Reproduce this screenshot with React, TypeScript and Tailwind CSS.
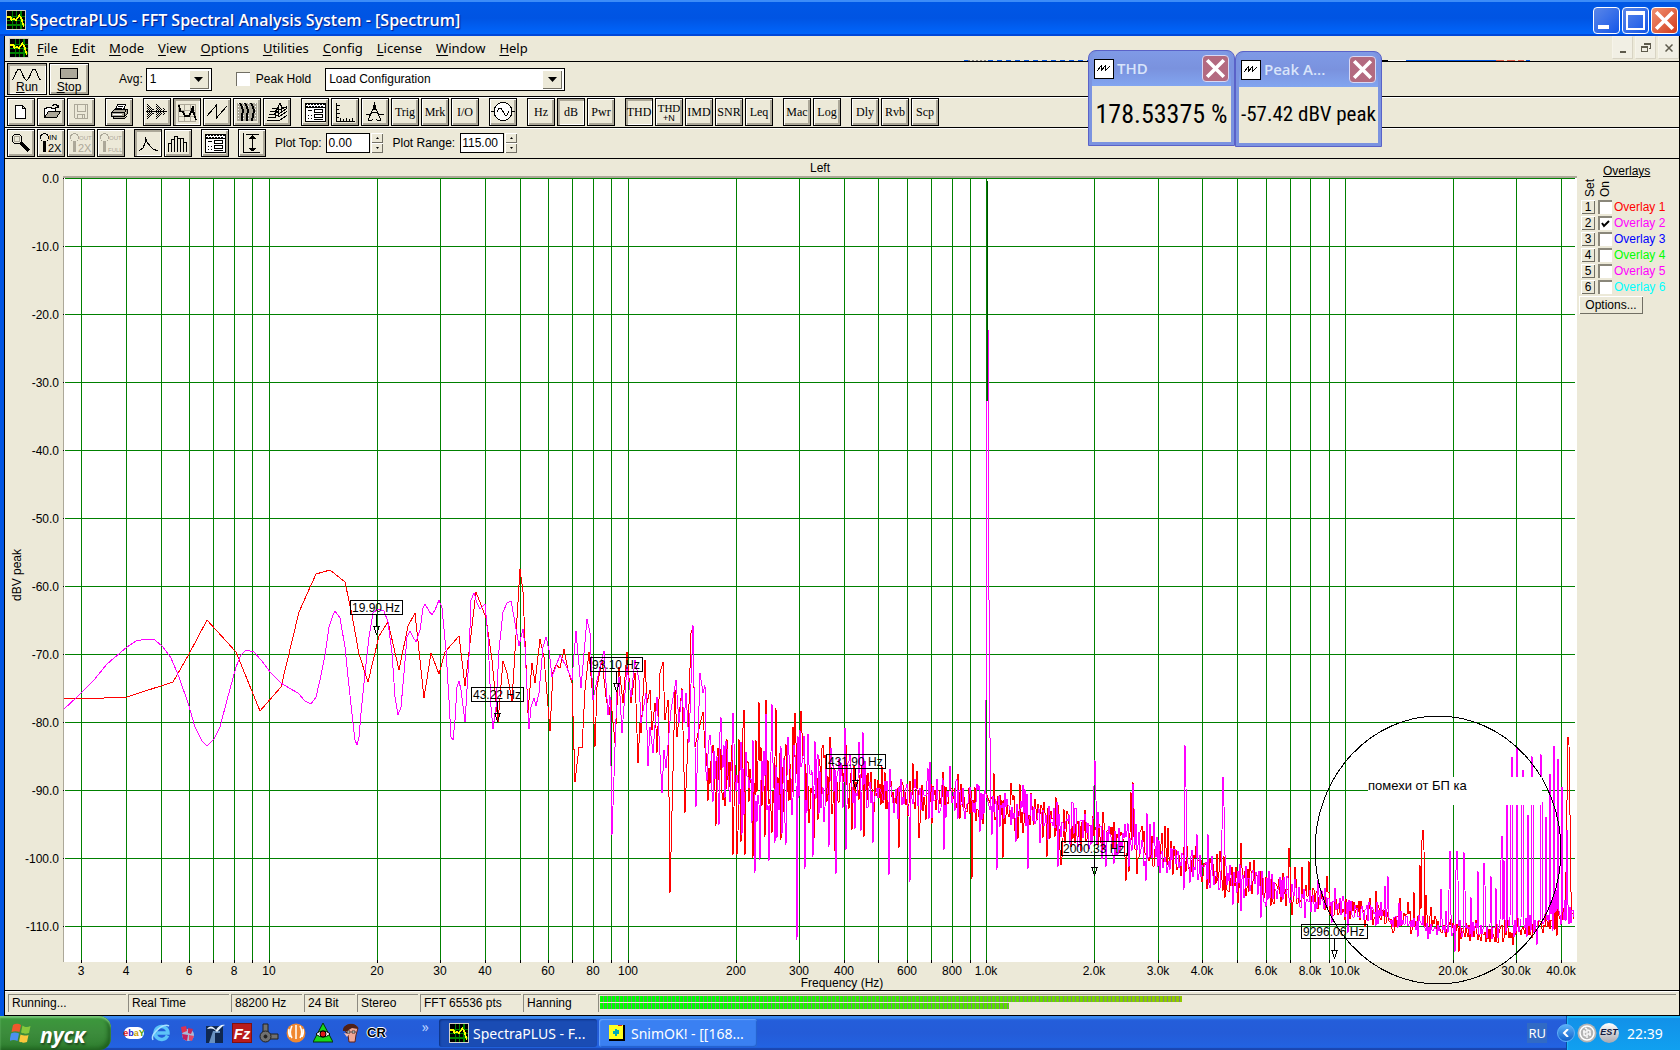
import type { ReactNode } from 'react';
import { clsx } from 'clsx';

const menuItems = ['File', 'Edit', 'Mode', 'View', 'Options', 'Utilities', 'Config', 'License', 'Window', 'Help'];

const overlays = [
  { id: 1, color: 'text-[#ff0000]', on: false },
  { id: 2, color: 'text-[#ff00ff]', on: true },
  { id: 3, color: 'text-[#0000ff]', on: false },
  { id: 4, color: 'text-[#00ff00]', on: false },
  { id: 5, color: 'text-[#ff00ff]', on: false },
  { id: 6, color: 'text-[#00ffff]', on: false },
];

const statusCells = [
  { text: 'Running...', width: 'w-[118px]' },
  { text: 'Real Time', width: 'w-[101px]' },
  { text: '88200 Hz', width: 'w-[71px]' },
  { text: '24 Bit', width: 'w-[51px]' },
  { text: 'Stereo', width: 'w-[61px]' },
  { text: 'FFT 65536 pts', width: 'w-[101px]' },
  { text: 'Hanning', width: 'w-[73px]' },
];

/* ---------- spectrum data ---------- */

type Point = [number, number];

// stretches below ~160 Hz, where single bins are visible
const redLow: Point[] = [
  [64, 698], [104, 698], [127, 697], [173, 682], [189, 654], [207, 620], [236, 652], [260, 711], [281, 687], [299, 612],
  [316, 574], [330, 570], [345, 582], [352, 615], [359, 654], [368, 682], [379, 636], [388, 622], [399, 670], [408, 626],
  [415, 613], [424, 698], [431, 653], [439, 674], [445, 652], [459, 636], [465, 686], [476, 592], [486, 618], [492, 660],
  [498, 722], [503, 661], [507, 673], [512, 701], [520, 569], [523, 592], [528, 713], [532, 663], [535, 683], [540, 639],
  [544, 657], [550, 731], [553, 672], [556, 665], [560, 668], [564, 649], [568, 670], [572, 683], [575, 782], [579, 747],
  [582, 748], [585, 690], [589, 652], [593, 700], [595, 747], [597, 687], [602, 660], [606, 697], [609, 715], [611, 700],
  [615, 743], [619, 667], [623, 703], [627, 652], [631, 703], [635, 673], [638, 763], [640, 723], [641, 733], [645, 660],
  [647, 703], [650, 690], [652, 730], [655, 703], [657, 753], [660, 673], [663, 662], [665, 720], [668, 700], [670, 893],
  [675, 690], [677, 737], [682, 688], [685, 813], [688, 740], [691, 633], [693, 628], [695, 747], [698, 733], [703, 712],
];

const magentaLow: Point[] = [
  [64, 709], [77, 697], [94, 680], [107, 664], [127, 647], [136, 641], [146, 639], [155, 640], [163, 647], [171, 658],
  [179, 677], [188, 703], [195, 727], [202, 741], [207, 746], [214, 739], [220, 727], [227, 700], [236, 667], [241, 655],
  [246, 650], [254, 652], [261, 660], [271, 673], [281, 683], [289, 688], [298, 693], [305, 701], [311, 704], [316, 697],
  [320, 680], [325, 655], [329, 627], [333, 615], [335, 611], [340, 618], [345, 647], [348, 677], [353, 723], [355, 740],
  [357, 745], [359, 737], [361, 713], [365, 673], [369, 637], [373, 613], [378, 609], [384, 611], [388, 622], [392, 653],
  [395, 697], [398, 715], [401, 707], [404, 673], [407, 637], [410, 631], [413, 637], [416, 642], [420, 630], [423, 608],
  [425, 604], [429, 611], [432, 615], [435, 610], [439, 600], [442, 608], [446, 650], [449, 700], [451, 737], [453, 740],
  [455, 720], [457, 687], [459, 681], [461, 690], [465, 722], [469, 657], [471, 600], [474, 593], [477, 603], [480, 609],
  [485, 604], [488, 637], [491, 707], [493, 729], [496, 707], [499, 650], [503, 612], [507, 603], [511, 601], [514, 617],
  [519, 646], [521, 637], [523, 629], [525, 647], [528, 710], [529, 729], [531, 707], [534, 698], [536, 706], [539, 693],
  [543, 647], [546, 637], [549, 650], [552, 677], [560, 655], [567, 668], [572, 680], [576, 631], [581, 688], [587, 619],
  [590, 633], [593, 700], [597, 680], [604, 651], [608, 715], [610, 695], [612, 835], [617, 690], [619, 677], [622, 733],
  [627, 667], [631, 697], [635, 660], [639, 680], [641, 723], [646, 693], [648, 766], [650, 727], [653, 753], [657, 697],
  [662, 793], [664, 750], [666, 768], [671, 710], [676, 680], [679, 723], [682, 690], [684, 723], [686, 693], [689, 743],
  [693, 625], [696, 807], [700, 673], [703, 693], [705, 685],
];

// noise floor: x, usual upper and lower edge
const floorEnvelope: [number, number, number][] = [
  [705, 722, 815], [740, 726, 825], [780, 728, 825], [820, 738, 822], [860, 751, 818], [900, 768, 820], [950, 775, 822],
  [1000, 785, 831], [1050, 796, 843], [1100, 808, 859], [1150, 830, 874], [1200, 846, 889], [1250, 860, 902],
  [1300, 876, 913], [1350, 893, 926], [1400, 906, 934], [1450, 915, 941], [1500, 920, 945], [1535, 919, 940],
  [1555, 905, 930], [1576, 898, 922],
];

const redSpikes: Point[] = [
  [716, 826], [733, 855], [737, 855], [745, 855], [753, 858], [759, 702], [776, 708], [781, 840], [802, 733], [814, 839],
  [830, 737], [846, 744], [858, 790], [889, 848], [899, 848], [913, 763], [943, 772], [972, 879], [1003, 858],
  [1056, 797], [1114, 822], [1131, 792], [1133, 782], [1168, 828], [1238, 903], [1241, 843], [1254, 860], [1289, 848],
  [1295, 867], [1302, 867], [1309, 861], [1327, 876], [1370, 898], [1376, 891], [1400, 898], [1408, 902], [1414, 892],
  [1420, 865], [1422, 840], [1423, 830], [1424, 850], [1426, 895], [1431, 907], [1516, 935], [1517, 810], [1519, 930],
  [1556, 905], [1566, 873], [1567, 800], [1568, 737], [1569, 745], [1570, 815], [1571, 892],
];

const magentaSpikes: Point[] = [
  [719, 825], [721, 717], [733, 713], [742, 835], [755, 873], [760, 860], [766, 714], [769, 861], [772, 704], [786, 845],
  [797, 940], [800, 730], [805, 869], [815, 741], [829, 847], [836, 874], [845, 728], [846, 850], [859, 742],
  [863, 732], [873, 843], [889, 875], [910, 882], [928, 768], [944, 850], [957, 779], [985, 790], [990, 810],
  [997, 870], [1023, 785], [1025, 789], [1028, 869], [1058, 867],
  [1073, 803], [1094, 786], [1095, 760], [1096, 800], [1106, 867], [1133, 784], [1134, 808], [1146, 881], [1147, 813],
  [1154, 822], [1184, 890], [1185, 745], [1186, 787], [1197, 834], [1222, 830], [1223, 777], [1224, 806], [1266, 907],
  [1335, 888], [1385, 886], [1388, 876], [1441, 889], [1449, 890], [1450, 851], [1454, 925], [1456, 870], [1457, 851],
  [1458, 880], [1460, 920], [1464, 852], [1465, 890], [1467, 925], [1471, 897], [1478, 871], [1481, 925], [1484, 863],
  [1485, 885], [1491, 876], [1496, 888], [1500, 920], [1501, 860], [1502, 836], [1504, 860], [1505, 920], [1507, 790],
  [1508, 920], [1510, 918], [1511, 800], [1512, 757], [1513, 925], [1515, 920], [1517, 747],
  [1518, 918], [1521, 920], [1522, 800], [1523, 770], [1524, 925], [1526, 918], [1528, 815], [1530, 915], [1532, 756],
  [1533, 800], [1535, 920], [1539, 920], [1541, 754], [1542, 800], [1544, 922], [1546, 817], [1548, 915], [1550, 774],
  [1552, 900], [1554, 746], [1556, 890], [1558, 759], [1560, 915], [1562, 787], [1564, 920], [1567, 830], [1568, 905],
];

function envelopeAt(x: number): [number, number] {
  for (let i = 1; i < floorEnvelope.length; i++) {
    const [x1, t1, b1] = floorEnvelope[i];
    if (x <= x1) {
      const [x0, t0, b0] = floorEnvelope[i - 1];
      const k = (x - x0) / (x1 - x0);
      return [t0 + (t1 - t0) * k, b0 + (b1 - b0) * k];
    }
  }
  return [900, 922];
}

function buildTrace(low: Point[], spikes: Point[], seed: number) {
  let s = seed;
  const rand = () => {
    s = (s * 1664525 + 1013904223) % 4294967296;
    return s / 4294967296;
  };
  const points: Point[] = [...low];
  const taken = new Set(spikes.map(p => p[0]));
  for (let x = 706; x < 1575; x++) {
    if (taken.has(x) || (x > 985 && x < 990)) continue;
    const [top, bottom] = envelopeAt(x);
    const span = bottom - top;
    let y = top + span * (rand() * 0.65 + rand() * 0.35);
    if (rand() > 0.9) y += span * 0.45;
    if (rand() > 0.93) y -= span * 0.35;
    points.push([x, Math.round(y)]);
  }
  points.push(...spikes);
  points.sort((a, b) => a[0] - b[0]);
  return points.map(p => p.join(',')).join(' ');
}

const redTrace = buildTrace(redLow, redSpikes, 7);
const magentaTrace = buildTrace(magentaLow, magentaSpikes, 1234);

const freqToX = (f: number) => Math.floor(269.4 + 358.75 * Math.log10(f / 10)) + 0.5;

const gridFreqs = [1, 10, 100, 1000, 10000]
  .flatMap(d => [1, 2, 3, 4, 5, 6, 7, 8, 9].map(n => n * d))
  .filter(f => f >= 3 && f <= 40000);

const labelledFreqs = gridFreqs.filter(f => [1, 2, 3, 4, 6, 8].includes(Number(String(f)[0])));
const freqLabel = (f: number) => (f >= 1000 ? `${(f / 1000).toFixed(1)}k` : String(f));

const levels = Array.from({ length: 12 }, (_, i) => i);

const markers = [
  { text: '19.90 Hz', left: 350, width: 53, stem: 376, top: 600 },
  { text: '43.22 Hz', left: 471, width: 53, stem: 497, top: 687 },
  { text: '93.10 Hz', left: 590, width: 53, stem: 616, top: 657 },
  { text: '431.90 Hz', left: 826, width: 60, stem: 855, top: 754 },
  { text: '2000.33 Hz', left: 1061, width: 67, stem: 1094, top: 841 },
  { text: '9296.06 Hz', left: 1301, width: 67, stem: 1334, top: 924 },
];

function SpectrumChart() {
  return (
    <svg viewBox="5 159 1573 831" className="h-full w-full font-['Liberation_Sans',Arial,sans-serif] text-[12px]" role="img" aria-label="Spectrum, left channel">
      <text x="820" y="172" textAnchor="middle">Left</text>
      <g shapeRendering="crispEdges">
        <rect x="63" y="176" width="1514" height="2" fill="#aca899" />
        <rect x="63" y="176" width="2" height="786" fill="#aca899" />
        <rect x="64" y="178" width="1513" height="784" fill="#fff" />
        <g stroke="#008000">
          {levels.map(i => (
            <line key={i} x1="65" x2="1575" y1={178.5 + i * 68} y2={178.5 + i * 68} />
          ))}
          {gridFreqs.map(f => (
            <line key={f} x1={freqToX(f)} x2={freqToX(f)} y1="179" y2="961" />
          ))}
        </g>
        <g stroke="#000">
          {levels.map(i => (
            <line key={i} x1="63" x2="64" y1={178.5 + i * 68} y2={178.5 + i * 68} />
          ))}
          {gridFreqs.map(f => (
            <line key={f} x1={freqToX(f)} x2={freqToX(f)} y1="960" y2="963" />
          ))}
        </g>
        <g fill="none">
          <polyline points={redTrace} stroke="#ff0000" />
          <polyline points={magentaTrace} stroke="#ff00ff" />
          {/* 1 kHz carrier */}
          <path d="M985.5 790V700M986.5 700V401M988.5 330V600M989.5 600V738M990.5 738V810" stroke="#ff00ff" />
          <path d="M987.5 181V401" stroke="#005000" />
        </g>
        <g fill="none" stroke="#000">
          {markers.map(m => (
            <g key={m.text}>
              <rect x={m.left + 0.5} y={m.top + 0.5} width={m.width - 1} height="14" />
              <path d={`M${m.stem + 0.5} ${m.top + 15}v11m-3 0h6l-3 8z`} />
            </g>
          ))}
        </g>
        <ellipse cx="1438" cy="850" rx="123" ry="134" fill="none" stroke="#000" />
        <rect x="1368" y="777" width="174" height="28" fill="#fff" />
      </g>
      {markers.map(m => (
        <text key={m.text} x={m.left + 2} y={m.top + 12}>{m.text}</text>
      ))}
      <text x="1368" y="790" className="text-[13px]">помехи от БП ка</text>
      {levels.map(i => (
        <text key={i} x="59" y={183 + i * 68} textAnchor="end">{i === 0 ? '0.0' : `-${i * 10}.0`}</text>
      ))}
      {labelledFreqs.map(f => (
        <text key={f} x={freqToX(f) - 0.5} y="975" textAnchor="middle">{freqLabel(f)}</text>
      ))}
      <text x="842" y="987" textAnchor="middle">Frequency (Hz)</text>
      <text transform="translate(21 575) rotate(-90)" textAnchor="middle">dBV peak</text>
    </svg>
  );
}

/* ---------- toolbar ---------- */

interface ToolButtonProps {
  label: string;
  pressed?: boolean;
  children: ReactNode;
}

function ToolButton({ label, pressed = false, children }: ToolButtonProps) {
  return (
    <button
      type="button"
      aria-label={label}
      aria-pressed={pressed}
      className={clsx(
        'flex h-7 w-7 shrink-0 items-center justify-center border border-black bg-[#ece9d8]',
        pressed
          ? 'shadow-[inset_2px_2px_0_#aca899,inset_-1px_-1px_0_#fff]'
          : 'shadow-[inset_1px_1px_0_#fff,inset_-2px_-2px_0_#aca899]',
      )}
    >
      {children}
    </button>
  );
}

function TextTool({ text, pressed }: { text: string; pressed?: boolean }) {
  return (
    <ToolButton label={text} pressed={pressed}>
      <span className="font-['Liberation_Serif','Times_New_Roman',serif] text-[12px] leading-none">{text}</span>
    </ToolButton>
  );
}

function IconTool({ label, pressed, children }: ToolButtonProps) {
  return (
    <ToolButton label={label} pressed={pressed}>
      <svg viewBox="1 1 26 26" className="h-[26px] w-[26px] shrink-0" fill="none" stroke="#000" shapeRendering="crispEdges">
        {children}
      </svg>
    </ToolButton>
  );
}

function Group({ children }: { children: ReactNode }) {
  return <div className="flex gap-0.5">{children}</div>;
}

function FormGlyph() {
  return (
    <>
      <path d="M4 5.5h20v18H4z" fill="#fff" />
      <path d="M4 6.5h20M5 8.5h18" strokeDasharray="2 1" />
      <path d="M4 9.5h20" />
      <path d="M13.5 11.5h8v3h-8zM13.5 16.5h8v3h-8zM7 12.5h4M6.5 17.5h1m2 0h1M6.5 20.5h1m2 0h1M13 21.5h9" />
    </>
  );
}

function ZoomGlyph({ color, top, bottom }: { color: string; top: string; bottom: string }) {
  return (
    <>
      <circle cx="7.5" cy="8.5" r="4" stroke={color} />
      <path d="M7.5 13v10" stroke={color} strokeWidth="3" />
      <text x="12" y="11" fill={color} stroke="none" className={top === 'IN' ? "font-['Liberation_Sans',sans-serif] text-[8px]" : "font-['Liberation_Sans',sans-serif] text-[6px]"}>{top}</text>
      <text x="11" y="23" fill={color} stroke="none" className={bottom === '2X' ? "font-['Liberation_Sans',sans-serif] text-[11px]" : "font-['Liberation_Sans',sans-serif] text-[6px]"}>{bottom}</text>
    </>
  );
}

function MainToolbar() {
  return (
    <div className="flex h-[30px] items-center gap-2.5 pl-0.5 shadow-[inset_0_1px_0_#fff]">
      <Group>
        <IconTool label="New">
          <path d="M8.5 7.5h7l3 3v10h-10zM15.5 7.5v3h3" fill="#fff" />
        </IconTool>
        <IconTool label="Open">
          <path d="M7.5 19v-9h2l1-1h3l1 1h4v3" fill="#fff" />
          <path d="M7.5 19.5l4-6h12l-4 6z" fill="#aca899" />
          <path d="M15 7.5h1l1-1h2l2 2m0-2v3h-3" />
        </IconTool>
        <IconTool label="Save">
          <g stroke="#aca899">
            <path d="M7.5 6.5h13v14h-12l-1-1zM10.5 7v6h8V7M10.5 20v-4h7v4M15 17v3" />
          </g>
        </IconTool>
      </Group>
      <IconTool label="Print">
        <path d="M10.5 12l2-5.500h8l-2 5.500z" fill="#fff" />
        <path d="M13 8.500h5M12 10.500h5" />
        <path d="M6.500 14.500l3-3h12l-2 3zM6.500 14.500v4h13v-4M19.500 18.500l3-3v-4h-1M8.500 18.500v2h11l2-2" fill="#aca899" />
        <path d="M8 16.500h9" stroke="#fff" />
      </IconTool>
      <Group>
        <IconTool label="Time series">
          <path d="M3 13.500h21" />
          <path d="M4.500 6v15M6.500 8v11M8.500 10v7M10.500 11v5M13.500 6v15M15.500 8v11M17.500 10v7M20.500 10v7" strokeDasharray="1 1" />
          <path d="M5.500 7v13M7.500 9v9M9.500 11v5M14.500 7v13M16.500 9v9M18.500 11v5M21.500 11v5" strokeDasharray="1 1" />
        </IconTool>
        <IconTool label="Spectrum" pressed>
          <path d="M5.500 6v17M11.500 6v17M17.500 6v17M22.500 6v17M5 6.500h18M5 12.500h18M5 18.500h18M5 23.500h18" stroke="#aca899" />
          <path d="M6 7l1 6 3 1 2 4h4l2-4 2-6 1 8 2 6M7 10l1 4M20 10v5" strokeWidth="1.500" />
        </IconTool>
        <IconTool label="Phase">
          <path d="M4 18L13.500 7v13L24 8" />
        </IconTool>
        <IconTool label="Spectrogram">
          <rect x="4" y="5" width="20" height="18" fill="#aca899" stroke="none" />
          <path d="M5.500 5v18M10.500 5v18M15.500 5v18M22.500 5v18" stroke="#fff" strokeDasharray="1 2" />
          <path d="M7 5l2 4 1 4-1 4v6M12 5l2 4 1 4-1 4v6M18 5l2 4 1 4-1 4-1 6" strokeWidth="2" />
        </IconTool>
        <IconTool label="3-D surface">
          <path d="M4 22.500h12l8-5M5 19.500h6l3-2 2 1 8-5M6 16.500h5l3-3 2 2 8-5M7 13.500h5l3-3 2 1 7-3M9 10.500h5l3-5 2 4h5M15 9v10M12 12v8M18 8v6" />
        </IconTool>
      </Group>
      <Group>
        <IconTool label="Settings"><FormGlyph /></IconTool>
        <IconTool label="Scaling">
          <path d="M5.500 5v18.500h18M6 7.500h3M6 11.500h2M6 15.500h3M6 19.500h2M9.500 20v3M12.500 21v2M15.500 20v3M18.500 21v2M21.500 20v3" />
        </IconTool>
        <IconTool label="Calibration">
          <path d="M13.500 4v4M12.500 8h2v3h-2zM12 11L7 22M15 11l5 11M5 16.500h4l2-2h5l2 2h5M7 22l3 1 2-2M20 22l-3 1-2-2" />
          <path d="M13.500 7v5" strokeWidth="3" />
        </IconTool>
        <TextTool text="Trig" />
        <TextTool text="Mrk" />
        <TextTool text="I/O" />
      </Group>
      <IconTool label="Signal generator">
        <circle cx="14" cy="13.500" r="9" fill="#fff" />
        <path d="M2 13.500h4M22 13.500h4M8 14l2-4h2l4 7h2l2-4" />
      </IconTool>
      <Group>
        <TextTool text="Hz" />
        <TextTool text="dB" pressed />
        <TextTool text="Pwr" />
      </Group>
      <Group>
        <TextTool text="THD" pressed />
        <ToolButton label="THD+N">
          <span className="flex flex-col items-center font-['Liberation_Serif','Times_New_Roman',serif] text-[11px] leading-[12px]">
            THD
            <span className="font-['Liberation_Sans',sans-serif] text-[9px] leading-[8px]">+N</span>
          </span>
        </ToolButton>
        <TextTool text="IMD" />
        <TextTool text="SNR" />
        <TextTool text="Leq" />
      </Group>
      <Group>
        <TextTool text="Mac" />
        <TextTool text="Log" />
      </Group>
      <Group>
        <TextTool text="Dly" />
        <TextTool text="Rvb" />
        <TextTool text="Scp" />
      </Group>
    </div>
  );
}

function DropArrow() {
  return (
    <span className="pointer-events-none flex h-[19px] w-5 items-center justify-center bg-[#ece9d8] shadow-[inset_1px_1px_0_#fff,inset_-1px_-1px_0_#716f64]">
      <svg viewBox="0 0 9 5" className="h-[5px] w-[9px]"><path d="M0 0h9L4.500 5z" /></svg>
    </span>
  );
}

function ComboBox({ id, value, width }: { id: string; value: string; width: string }) {
  return (
    <div className={clsx('flex h-[23px] items-center border border-black bg-white pr-0.5', width)}>
      <select id={id} aria-label={value} defaultValue={value} className="min-w-0 flex-1 appearance-none bg-transparent pl-[3px] text-[12px] outline-none">
        <option>{value}</option>
      </select>
      <DropArrow />
    </div>
  );
}

function RunToolbar() {
  return (
    <div className="flex h-[34px] items-center">
      <div className="flex gap-0.5 pl-0.5">
        <button type="button" className="flex h-8 w-10 flex-col items-center justify-end border border-black shadow-[inset_2px_2px_0_#aca899,inset_-1px_-1px_0_#fff]">
          <svg viewBox="0 0 30 13" className="h-[13px] w-[30px]" fill="none" stroke="#000" shapeRendering="crispEdges">
            <path d="M0 12c2 0 4-11 7-11s4 11 7.500 11S19 1 22 1s4 11 7 11" />
          </svg>
          <span className="text-[12px] leading-[13px]"><u>R</u>un</span>
        </button>
        <button type="button" className="flex h-8 w-10 flex-col items-center justify-end border border-black shadow-[inset_1px_1px_0_#fff,inset_-2px_-2px_0_#aca899]">
          <span className="mb-0.5 h-[11px] w-[18px] border border-black bg-[#aca899]" />
          <span className="text-[12px] leading-[13px]"><u>S</u>top</span>
        </button>
      </div>
      <label htmlFor="avg" className="ml-[30px] mr-[3px]">Avg:</label>
      <ComboBox id="avg" value="1" width="w-[66px]" />
      <label className="ml-6 mr-3.5 flex items-center gap-1.5">
        <input type="checkbox" className="h-[14px] w-[14px] appearance-none border-l border-t border-[#716f64] bg-white" />
        Peak Hold
      </label>
      <ComboBox id="configuration" value="Load Configuration" width="w-[240px]" />
    </div>
  );
}

function SpinField({ id, label, value }: { id: string; label: string; value: string }) {
  return (
    <div className="flex items-center">
      <label htmlFor={id} className="mr-[5px]">{label}</label>
      <input id={id} defaultValue={value} className="h-5 w-11 border border-black bg-white pl-px text-[12px] outline-none" />
      <div className="ml-px flex flex-col">
        <button type="button" aria-label={`${label} up`} className="flex h-2.5 w-3 items-center justify-center shadow-[inset_1px_1px_0_#fff,inset_-1px_-1px_0_#716f64]">
          <svg viewBox="0 0 3 2" className="h-0.5 w-[3px]"><path d="M0 2h3L1.500 0z" /></svg>
        </button>
        <button type="button" aria-label={`${label} down`} className="flex h-2.5 w-3 items-center justify-center shadow-[inset_1px_1px_0_#fff,inset_-1px_-1px_0_#716f64]">
          <svg viewBox="0 0 3 2" className="h-0.5 w-[3px]"><path d="M0 0h3L1.500 2z" /></svg>
        </button>
      </div>
    </div>
  );
}

function PlotToolbar() {
  return (
    <div className="flex h-[30px] items-center gap-[9px] pl-0.5 shadow-[inset_0_1px_0_#fff]">
      <Group>
        <IconTool label="Zoom">
          <circle cx="10" cy="10" r="5" fill="#ece9d8" />
          <circle cx="10" cy="10" r="3" stroke="#aca899" />
          <path d="M14 14l8 8" strokeWidth="3" />
        </IconTool>
        <IconTool label="Zoom in 2X"><ZoomGlyph color="#000" top="IN" bottom="2X" /></IconTool>
        <IconTool label="Zoom out 2X"><ZoomGlyph color="#aca899" top="OUT" bottom="2X" /></IconTool>
        <IconTool label="Zoom out full"><ZoomGlyph color="#aca899" top="OUT" bottom="FULL" /></IconTool>
      </Group>
      <Group>
        <IconTool label="Line plot" pressed>
          <path d="M5 22l4-3 2-5V8l2 5 3 4 3 3 5 2" />
        </IconTool>
        <IconTool label="Bar plot">
          <path d="M4.500 23v-9h3v9M7.500 14v-4h3v13M10.500 10V7.500h3V23M13.500 9.500h3V23M16.500 9.500h3V23M19.500 13.500h3V23" />
        </IconTool>
      </Group>
      <IconTool label="Plot settings"><FormGlyph /></IconTool>
      <IconTool label="Fit vertical">
        <path d="M5.500 4v19.500h16M8 5.500h13M14.500 6v16M11 9.500h7M12 8.500h5M13 7.500h3M11 19.500h7M12 20.500h5M13 21.500h3" />
      </IconTool>
      <SpinField id="plot-top" label="Plot Top:" value="0.00" />
      <SpinField id="plot-range" label="Plot Range:" value="115.00" />
    </div>
  );
}

/* ---------- windows ---------- */

function AppIcon({ className }: { className: string }) {
  return (
    <svg viewBox="0 0 18 18" className={clsx('shrink-0', className)} shapeRendering="crispEdges">
      <rect width="18" height="18" fill="#d4d0c8" />
      <rect x="1" y="1" width="16" height="16" />
      <path d="M5.500 1v16M9.500 1v16M13.500 1v16M1 5.500h16M1 9.500h16M1 13.500h16" stroke="#008000" />
      <path d="M1 6h3l1 3 2-1 2 1 3-4 2 3 2 7" fill="none" stroke="#ffff00" strokeWidth="1.500" />
    </svg>
  );
}

function Cross({ className }: { className: string }) {
  return (
    <svg viewBox="0 0 16 16" className={className} fill="none" stroke="currentColor" strokeWidth="3">
      <path d="M1 1l14 14M15 1L1 15" />
    </svg>
  );
}

function TitleBar() {
  return (
    <header className="flex h-9 items-center bg-linear-to-b from-[#0058e6] via-[#0054e3] to-[#0068ff] pl-1.5 pr-0.5 pt-1 shadow-[inset_0_2px_0_#3c8cf8,inset_0_-2px_0_#0048d8]">
      <AppIcon className="mr-1 h-5 w-5" />
      <h1 className="flex-1 font-['Open_Sans','Noto_Sans',sans-serif] text-[16px] font-semibold text-white [text-shadow:1px_1px_1px_#0a1883]">
        SpectraPLUS - FFT Spectral Analysis System - [Spectrum]
      </h1>
      <div className="flex gap-0.5">
        <button type="button" aria-label="Minimize" className="flex h-[27px] w-[27px] items-end rounded-[4px] border border-white bg-linear-to-br from-[#5a86e8] to-[#0f55e8] pb-1 pl-1">
          <span className="h-1 w-[11px] bg-white" />
        </button>
        <button type="button" aria-label="Maximize" className="flex h-[27px] w-[27px] items-center justify-center rounded-[4px] border border-white bg-linear-to-br from-[#5a86e8] to-[#0f55e8]">
          <span className="h-[19px] w-[19px] border-2 border-t-4 border-white" />
        </button>
        <button type="button" aria-label="Close" className="flex h-[27px] w-[27px] items-center justify-center rounded-[4px] border border-white bg-linear-to-br from-[#f09070] to-[#d03818] text-white">
          <Cross className="h-[19px] w-[19px]" />
        </button>
      </div>
    </header>
  );
}

function MenuBar() {
  const mdi = 'flex h-[23px] w-[21px] items-center justify-center border border-[#f6f4ea] border-b-[#d8d4c4] border-r-[#d8d4c4] bg-[#f1efe4] text-[#5d5a4c]';
  return (
    <div className="relative flex h-[25px] items-center pb-0.5 pl-1">
      <AppIcon className="h-5 w-5" />
      <nav className="flex flex-1 gap-3.5 pl-2 font-['Noto_Sans','DejaVu_Sans',sans-serif] text-[13px]">
        {menuItems.map(item => (
          <button type="button" key={item} className="leading-5">
            <span className="underline underline-offset-2">{item[0]}</span>
            {item.slice(1)}
          </button>
        ))}
      </nav>
      <div className="flex gap-0.5">
        <button type="button" aria-label="Minimize child" className={mdi}>
          <span className="mt-2 h-0.5 w-1.5 bg-[#5d5a4c]" />
        </button>
        <button type="button" aria-label="Restore child" className={mdi}>
          <svg viewBox="0 0 10 9" className="h-[9px] w-2.5" fill="none" stroke="currentColor" shapeRendering="crispEdges">
            <path d="M3 .5h6.500v5H8M3 1.500h6M.5 3.500h6v5h-6zM0 4.500h7" />
          </svg>
        </button>
        <button type="button" aria-label="Close child" className={mdi}>
          <Cross className="h-2 w-2" />
        </button>
      </div>
      {/* sliver of the window behind */}
      <svg viewBox="0 0 566 1" className="absolute bottom-0 left-[959px] h-px w-[566px]" shapeRendering="crispEdges">
        <path d="M0 .5h4M24 .5h100" stroke="#0054e3" strokeDasharray="5 4" />
        <path d="M4 .5h20" stroke="#808080" strokeDasharray="2 2" />
        <path d="M442 .5h90M562 .5h4" stroke="#0054e3" />
        <path d="M417 .5h7" stroke="#000" />
        <path d="M424 .5h18" stroke="#fff" />
        <path d="M532 .5h28" stroke="#e0604a" strokeDasharray="8 3" />
      </svg>
    </div>
  );
}

function MeterWindow({ title, value, className, valueClass }: { title: string; value: string; className: string; valueClass: string }) {
  return (
    <section className={clsx('absolute flex h-24 w-[147px] flex-col rounded-t-lg border border-[#5a62c8] bg-[#7b93e0] p-[3px] pt-0', className)}>
      <div className="flex h-[35px] items-center gap-[3px] rounded-t-lg bg-linear-to-b from-[#7f9ae6] via-[#7a92de] to-[#82a5f0] px-0.5">
        <svg viewBox="0 0 20 20" className="h-5 w-5 shrink-0" shapeRendering="crispEdges">
          <rect x=".5" y=".5" width="19" height="19" fill="#fff" stroke="#000" />
          <path d="M3 12l4-5v5l4-5v5l5-5" fill="none" stroke="#000" />
        </svg>
        <h2 className="flex-1 whitespace-nowrap font-['Open_Sans','Noto_Sans',sans-serif] text-[15px] font-semibold text-[#d8e4fa]">{title}</h2>
        <button type="button" aria-label={`Close ${title}`} className="flex h-[27px] w-[27px] shrink-0 items-center justify-center rounded-[4px] border border-[#d8d8f4] bg-[#b36a80] text-white">
          <Cross className="h-[19px] w-[19px]" />
        </button>
      </div>
      <output className={clsx("flex flex-1 items-center justify-center whitespace-nowrap bg-[#ece9d8] font-['Roboto_Condensed','Liberation_Sans_Narrow','Liberation_Sans',sans-serif]", valueClass)}>
        {value}
      </output>
    </section>
  );
}

function OverlayPanel() {
  return (
    <aside className="flex w-[101px] shrink-0 flex-col pt-[5px]">
      <h2 className="ml-[25px] text-[12px] leading-[14px] underline">Overlays</h2>
      <div className="flex h-[21px] items-end gap-0.5 pb-0.5 pl-1.5 leading-[13px]">
        <span className="rotate-180 [writing-mode:vertical-rl]">Set</span>
        <span className="rotate-180 [writing-mode:vertical-rl]">On</span>
      </div>
      <ul>
        {overlays.map(o => (
          <li key={o.id} className="flex h-4 items-center pl-[3px]">
            <button type="button" aria-label={`Set overlay ${o.id}`} className="h-3.5 w-3.5 text-[12px] leading-[13px] shadow-[inset_1px_1px_0_#fff,inset_-1px_-1px_0_#716f64]">
              {o.id}
            </button>
            <label className={clsx('flex items-center gap-0.5 whitespace-nowrap pl-[3px] leading-4', o.color)}>
              <span className="grid">
                <input type="checkbox" defaultChecked={o.on} className="col-start-1 row-start-1 h-3.5 w-3.5 appearance-none border-l-2 border-t-2 border-[#8a877a] bg-white" />
                {o.on && (
                  <svg viewBox="0 0 14 14" className="pointer-events-none col-start-1 row-start-1 h-3.5 w-3.5" fill="none" stroke="#000" strokeWidth="2">
                    <path d="M4 7l2 3 5-5" />
                  </svg>
                )}
              </span>
              Overlay {o.id}
            </label>
          </li>
        ))}
      </ul>
      <button type="button" className="ml-px mt-px h-[18px] w-16 text-[12px] leading-4 shadow-[inset_1px_1px_0_#fff,inset_-1px_-1px_0_#716f64]">
        Options...
      </button>
    </aside>
  );
}

function StatusBar() {
  return (
    <footer className="flex h-[26px] gap-0.5 border-y border-black px-[3px] pt-[3px] shadow-[inset_0_1px_0_#fff]">
      {statusCells.map(cell => (
        <div key={cell.text} className={clsx('h-[18px] shrink-0 border-l border-t border-[#8c8a80] pl-[3px] leading-4', cell.width)}>
          {cell.text}
        </div>
      ))}
      <div className="flex h-[18px] flex-1 flex-col gap-px border-l border-t border-[#8c8a80] pl-px pt-px">
        <div className="h-1.5 w-[582px] bg-[repeating-linear-gradient(90deg,transparent_0_3px,#808080_3px_4px),linear-gradient(90deg,#00ff00_0,#00ff00_100px,#90c800_582px)]" />
        <div className="h-1.5 w-[409px] bg-[repeating-linear-gradient(90deg,transparent_0_3px,#808080_3px_4px),linear-gradient(90deg,#00ff00_0,#00ff00_100px,#90c800_582px)]" />
      </div>
    </footer>
  );
}

/* ---------- taskbar ---------- */

function QuickLaunch() {
  return (
    <div className="flex items-center gap-[7px]">
      <a href="#ebay" className="flex h-3 w-5 items-center justify-center rounded-md bg-white font-['Liberation_Sans',sans-serif] text-[9px] font-bold leading-none">
        <span className="text-[#e02020]">e</span><span className="text-[#2020d0]">b</span><span className="text-[#c8a000]">a</span><span className="text-[#50a000]">Y</span>
      </a>
      <a href="#browser" aria-label="Internet Explorer">
        <svg viewBox="0 0 20 20" className="h-5 w-5" fill="none">
          <path d="M16.500 12.500A6.500 6.500 0 1 1 17 10H6" stroke="#5cc4f8" strokeWidth="3.500" />
          <path d="M2 17C-1 11 12 0 18 3" stroke="#a8e0ff" strokeWidth="1.500" />
        </svg>
      </a>
      <a href="#media" aria-label="Media">
        <svg viewBox="0 0 20 20" className="h-5 w-5">
          <circle cx="10" cy="12" r="6" fill="#a8b8d8" />
          <path d="M3 4l5-1 1 5-5 2z" fill="#e03050" />
          <path d="M10 5l5 1-2 5-3-1z" fill="#c82858" />
          <path d="M4 11l6 1-1 6-4-2z" fill="#c02060" />
          <path d="M11 12l5 1-2 5-3-1z" fill="#e04868" />
        </svg>
      </a>
      <a href="#notes" aria-label="Office">
        <svg viewBox="0 0 20 20" className="h-5 w-5">
          <rect x="1" y="3" width="17" height="17" fill="#102850" />
          <path d="M8 8h7v2h-5v10H4z" fill="#6890c0" />
          <path d="M2 6c4-5 7-1 9 1 2-4 6-6 9-5-3 1-5 4-8 7-3-4-6-4-10-3z" fill="#e8f4ff" />
        </svg>
      </a>
      <a href="#filezilla" className="flex h-5 w-5 items-center justify-center border border-[#801010] bg-[#b81c1c] font-['Liberation_Sans',sans-serif] text-[15px] font-bold italic leading-none text-white">
        Fz
      </a>
      <a href="#tool" aria-label="Tool">
        <svg viewBox="0 0 20 20" className="h-5 w-5" fill="#707070" stroke="#202020">
          <path d="M4 1h5v9H4zM10 11h9v5h-9z" />
          <circle cx="6.500" cy="13.500" r="5.500" />
          <circle cx="6.500" cy="13.500" r="1.500" fill="#202020" />
        </svg>
      </a>
      <a href="#ball" aria-label="Ball">
        <svg viewBox="0 0 20 20" className="h-5 w-5" fill="none">
          <circle cx="10" cy="10" r="9.500" fill="#f08830" />
          <path d="M10 2v14M6 3c-2 4-2 9 0 12M14 3c2 4 2 9 0 12M3 6c-1 3 0 6 1 8M17 6c1 3 0 6-1 8" stroke="#fff" strokeWidth="1.500" />
        </svg>
      </a>
      <a href="#eye" aria-label="Eye">
        <svg viewBox="0 0 20 20" className="h-5 w-5">
          <path d="M10 0l10 19H0z" fill="#18d818" stroke="#083008" />
          <path d="M3 11c4-4 10-4 14 0-4 4-10 4-14 0z" fill="#fff" stroke="#000" />
          <circle cx="10" cy="11" r="3" fill="#e01818" stroke="#000" />
        </svg>
      </a>
      <a href="#face" aria-label="Face">
        <svg viewBox="0 0 20 20" className="h-5 w-5">
          <path d="M4 6c0-5 11-7 14-1l-2 7-1 7H9l-1-7z" fill="#f0a898" stroke="#602018" />
          <path d="M3 8c-1-8 14-10 15-2l-6-1-5 3z" fill="#502018" />
          <path d="M7 8h3v2H7zM12 8h3v2h-3z" fill="#fff" stroke="#000" strokeWidth=".7" />
          <path d="M4 10l5 1-2 3z" fill="#f8c0b0" />
        </svg>
      </a>
      <a href="#cr" className="font-['Liberation_Sans',sans-serif] text-[13px] font-bold leading-5 text-black [text-shadow:1px_0_#fff,-1px_0_#fff,0_1px_#fff,0_-1px_#fff]">
        CR
      </a>
    </div>
  );
}

function Taskbar() {
  return (
    <div className="flex h-[34px] shrink-0 items-center bg-linear-to-b from-[#245edb] via-[#245cd8] to-[#2264e4] font-['Noto_Sans','DejaVu_Sans',sans-serif] text-white shadow-[inset_0_3px_2px_#3c8cf0,inset_0_-2px_1px_#1a45b0]">
      <button type="button" className="flex h-full w-[111px] items-center rounded-r-xl bg-linear-to-b from-[#3c9a3c] via-[#3c8c3c] to-[#2f7f2f] pl-2.5 shadow-[inset_0_2px_2px_#78c878,inset_-3px_-2px_4px_#1f5f1f]">
        <svg viewBox="0 0 24 24" className="mr-1.5 h-6 w-6">
          <path d="M3 4c3-2 6-1 8 0l-1.500 7c-3-1-5-1-8 0z" fill="#f0582c" />
          <path d="M12.500 4.500c3 2 5 2 8 0.500L19 12c-3 1-5 1-8-.5z" fill="#86c83c" />
          <path d="M1 12.500c3-1.500 5-1 8 0L7.500 20c-3-1.500-5-1.500-8 0z" fill="#4c90f0" />
          <path d="M10.500 13.500c3 1 5 1.500 8 .5L17 21c-3 1-5 1-8-.5z" fill="#fac83c" />
        </svg>
        <span className="pt-1 font-['Open_Sans','Noto_Sans',sans-serif] text-[21px] font-bold italic leading-none [text-shadow:1px_2px_2px_#204820]">пуск</span>
      </button>
      <div className="flex w-[328px] items-center justify-between pl-[13px] pr-2.5">
        <QuickLaunch />
        <button type="button" className="pb-3 text-[14px] leading-none text-[#b8d0ff]">»</button>
      </div>
      <div className="flex flex-1 gap-0.5">
        <button type="button" className="flex h-7 w-[158px] items-center gap-1 whitespace-nowrap rounded-[3px] bg-[#1a4cb4] pl-2.5 text-[14px] shadow-[inset_1px_1px_2px_#0c3080]">
          <AppIcon className="h-5 w-5" />
          SpectraPLUS - F...
        </button>
        <button type="button" className="flex h-7 w-[158px] items-center gap-1.5 whitespace-nowrap rounded-[3px] bg-[#3a80f2] pl-2.5 text-[14px] shadow-[inset_1px_1px_1px_#68a4fc,inset_-1px_-1px_1px_#2460cc]">
          <svg viewBox="0 0 17 17" className="h-4 w-4" shapeRendering="crispEdges">
            <rect width="17" height="17" fill="#000" />
            <rect width="15" height="15" fill="#ffff20" />
            <path d="M6 4h3v1h2v5H9v2H6v-2H4V6h2z" fill="#00a8b8" />
            <path d="M10 0h4v1h-4z" fill="#e02020" />
          </svg>
          SnimOK! - [[168...
        </button>
      </div>
      <span className="mr-[19px] h-5 bg-[#316ac5] px-px text-[13px] leading-5">RU</span>
      <div className="flex h-full w-[114px] items-center bg-linear-to-b from-[#1290e8] to-[#10a0f0] shadow-[inset_1px_0_0_#0a4aa0,inset_2px_2px_1px_#20b8f8]">
        <button type="button" aria-label="Show hidden icons" className="-ml-[9px] mr-0.5 flex h-[18px] w-[18px] items-center justify-center rounded-full border border-[#60b0f8] bg-linear-to-b from-[#58b0f8] to-[#1060c8]">
          <svg viewBox="0 0 8 8" className="h-2 w-2" fill="none" stroke="#fff" strokeWidth="2"><path d="M6 0L2 4l4 4" /></svg>
        </button>
        <svg viewBox="0 0 20 20" className="h-5 w-5" fill="none">
          <circle cx="10" cy="10" r="9.500" fill="#b4b4b4" />
          <circle cx="10" cy="10" r="7" stroke="#fff" strokeWidth="1.500" />
          <path d="M6 9h4V6m0 0L8 5m6 6h-4v4M7 7v5l2 1M13 13V8l-2-1" stroke="#f8f8f8" strokeWidth="1.500" />
        </svg>
        <span className="ml-0.5 flex h-5 w-5 items-center justify-center rounded-full bg-linear-to-b from-white to-[#a8a8b0] font-['Liberation_Sans',sans-serif] text-[9px] font-bold italic text-[#101840]">EST</span>
        <time className="ml-2 text-[14px]">22:39</time>
      </div>
    </div>
  );
}

export default function App() {
  return (
    <div className="flex h-screen flex-col overflow-hidden bg-[#0054e3] font-['Liberation_Sans',Arial,sans-serif] text-[12px] text-black">
      <TitleBar />
      <main className="relative ml-1 flex min-h-0 flex-1 flex-col border-x border-black bg-[#ece9d8]">
        <MenuBar />
        <div className="border-t border-black"><RunToolbar /></div>
        <div className="border-t border-black"><MainToolbar /></div>
        <div className="border-t border-black"><PlotToolbar /></div>
        <div className="flex min-h-0 flex-1 border-t border-black">
          <div className="min-w-0 flex-1">
            <SpectrumChart />
          </div>
          <OverlayPanel />
        </div>
        <StatusBar />
        <MeterWindow title="THD" value="178.53375 %" className="right-[444px] top-3.5" valueClass="text-[26px]" />
        <MeterWindow title="Peak A..." value="-57.42 dBV peak" className="right-[297px] top-[15px]" valueClass="text-[21px]" />
      </main>
      <Taskbar />
    </div>
  );
}
